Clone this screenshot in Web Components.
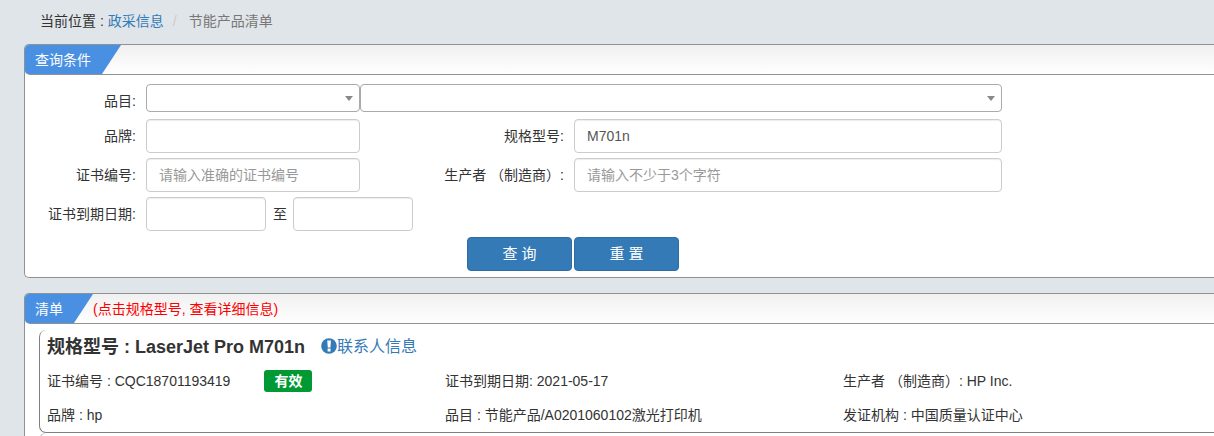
<!DOCTYPE html>
<html lang="zh-CN">
<head>
<meta charset="utf-8">
<title>节能产品清单</title>
<style>
  html {
    background: #e0e5e9;
  }

  body {
    margin: 0;
    font: 14px/20px "Liberation Sans", "Noto Sans CJK SC", sans-serif;
    color: #333;
  }

  main {
    display: flex;
    flex-direction: column;
    gap: 15px;
    padding-left: 24px;
  }
</style>
</head>
<body>
<main>
  <page-crumbs section="政采信息" current="节能产品清单">当前位置 :</page-crumbs>

  <title-panel>
    <span slot="title">查询条件</span>
    <query-form></query-form>
  </title-panel>

  <title-panel>
    <span slot="title">清单</span>
    <span slot="note">(点击规格型号, 查看详细信息)</span>
    <product-card model="LaserJet Pro M701n" status="有效">
      <span slot="number">证书编号 : CQC18701193419</span>
      <span slot="expires">证书到期日期: 2021-05-17</span>
      <span slot="maker">生产者 （制造商）: HP Inc.</span>
      <span slot="brand">品牌 : hp</span>
      <span slot="category">品目 : 节能产品/A0201060102激光打印机</span>
      <span slot="issuer">发证机构 : 中国质量认证中心</span>
    </product-card>
    <product-card></product-card>
  </title-panel>
</main>

<script>
class PageCrumbs extends HTMLElement {
  constructor() {
    super();
    this.attachShadow({ mode: "open" });
  }

  static get styles() {
    return /* css */`
      :host {
        display: block;
        padding: 10px 0 0 16px;
        line-height: 22px;
      }

      nav {
        display: flex;
        height: 19px;
      }

      a {
        color: #337ab7;
        text-decoration: none;
        margin-left: 4px;
      }

      .sep {
        color: #ccc;
        padding: 0 12px 0 9px;
      }

      .current {
        color: #777;
      }
    `;
  }

  connectedCallback() {
    this.shadowRoot.innerHTML = /* html */`
    <style>${PageCrumbs.styles}</style>
    <nav>
      <slot></slot>
      <a href="#">${this.getAttribute("section")}</a>
      <span class="sep">/</span>
      <span class="current">${this.getAttribute("current")}</span>
    </nav>`;
  }
}

class TitlePanel extends HTMLElement {
  constructor() {
    super();
    this.attachShadow({ mode: "open" });
  }

  static get styles() {
    return /* css */`
      :host {
        display: block;
        background: #fff;
        border: 1px solid #8f9193;
        border-right: 0;
        border-radius: 5px 0 0 5px;
      }

      header {
        display: flex;
        height: 29px;
        line-height: 30px;
        background: linear-gradient(#f0f0f0, #fff);
        border-bottom: 1px solid #8f9193;
        border-radius: 4px 0 0 5px;
      }

      /* blue tab with a slanted right edge */
      .tab {
        padding: 0 30px 0 10px;
        color: #fff;
        background: #4a90e2;
        border-radius: 4px 0 0 4px;
        clip-path: polygon(0 0, 100% 0, calc(100% - 19px) 100%, 0 100%);
      }

      .note {
        color: #f00;
      }

      .body {
        padding: 0 0 6px 14px;
      }
    `;
  }

  connectedCallback() {
    this.shadowRoot.innerHTML = /* html */`
    <style>${TitlePanel.styles}</style>
    <header>
      <div class="tab"><slot name="title"></slot></div>
      <div class="note"><slot name="note"></slot></div>
    </header>
    <div class="body"><slot></slot></div>`;
  }
}

class QueryForm extends HTMLElement {
  constructor() {
    super();
    this.attachShadow({ mode: "open" });
  }

  static get styles() {
    return /* css */`
      :host {
        display: block;
        padding-top: 9px;
      }

      form {
        display: grid;
        grid-template-columns: repeat(9, minmax(0, 107fr)) minmax(0, 212fr);
        grid-template-rows: 30px;
        row-gap: 5px;
      }

      label {
        white-space: nowrap;
      }

      form > label {
        padding: 7px 10px 0 0;
        text-align: right;
      }

      input, select {
        box-sizing: border-box;
        width: 100%;
        font: inherit;
        border-radius: 4px;
        background-color: #fff;
      }

      input {
        height: 34px;
        padding: 6px 12px;
        color: #555;
        border: 1px solid #ccc;
        box-shadow: inset 0 1px 1px rgba(0, 0, 0, 0.075);
      }

      input::placeholder {
        color: #999;
        opacity: 1;
      }

      select {
        appearance: none;
        height: 28px;
        border: 1px solid #aaa;
      }

      /* the arrow shares one grid cell with its select */
      .arrow {
        display: grid;
        align-content: start;
      }

      .arrow > * {
        grid-area: 1 / 1;
      }

      .arrow svg {
        width: 8px;
        height: 5px;
        margin-right: 7px;
        place-self: center end;
        pointer-events: none;
      }

      .lead { grid-column: 1; }
      .span2 { grid-column: span 2; }
      .span4 { grid-column: span 4; }
      .span6 { grid-column: span 6; }

      .dates {
        grid-column: span 8;
        display: flex;
        align-items: center;
      }

      .dates input {
        width: 120px;
      }

      .dates label {
        padding: 0 6px 0 7px;
      }

      .actions {
        grid-column: 5 / -1;
        display: flex;
        gap: 2px;
        padding-top: 1px;
      }

      button {
        width: 105px;
        height: 34px;
        font: inherit;
        font-size: 15px;
        color: #fff;
        background: #337ab7;
        border: 1px solid #2e6da4;
        border-radius: 4px;
      }
    `;
  }

  connectedCallback() {
    const arrow = /* html */`<svg viewBox="0 0 8 5" aria-hidden="true"><path d="M0 0h8L4 5z" fill="#888"/></svg>`;

    this.shadowRoot.innerHTML = /* html */`
    <style>${QueryForm.styles}</style>
    <form>
      <label class="lead" id="category-label" for="category">品目:</label>
      <div class="arrow span2"><select id="category"></select>${arrow}</div>
      <div class="arrow span6"><select aria-labelledby="category-label"></select>${arrow}</div>

      <label class="lead" for="brand">品牌:</label>
      <div class="span2"><input id="brand" type="text"></div>
      <label class="span2" for="model">规格型号:</label>
      <div class="span4"><input id="model" type="text" value="M701n"></div>

      <label class="lead" for="number">证书编号:</label>
      <div class="span2"><input id="number" type="text" placeholder="请输入准确的证书编号"></div>
      <label class="span2" for="maker">生产者 （制造商）:</label>
      <div class="span4"><input id="maker" type="text" placeholder="请输入不少于3个字符"></div>

      <label class="lead" for="from">证书到期日期:</label>
      <div class="dates">
        <input id="from" type="text">
        <label for="to">至</label>
        <input id="to" type="text">
      </div>

      <div class="actions">
        <button type="button">查 询</button>
        <button type="reset">重 置</button>
      </div>
    </form>`;
  }
}

class ProductCard extends HTMLElement {
  constructor() {
    super();
    this.attachShadow({ mode: "open" });
  }

  static get styles() {
    return /* css */`
      :host {
        display: block;
        min-height: 20px;
        padding-left: 7px;
        border: 1px solid #808080;
        border-width: 0 0 1px 1px;
        border-radius: 7px 0 0 7px;
      }

      :host(:first-of-type) {
        margin-top: 6px;
      }

      .head {
        display: flex;
        align-items: center;
        gap: 16px;
        height: 34px;
      }

      h4 {
        margin: 0;
        font-size: 18px;
        line-height: 20px;
      }

      a {
        display: flex;
        align-items: flex-start;
        font-size: 16px;
        color: #337ab7;
        text-decoration: none;
      }

      a svg {
        width: 16px;
        height: 17px;
      }

      .facts {
        display: grid;
        grid-template-columns: minmax(0, 398fr) minmax(0, 398fr) minmax(0, 371fr);
        line-height: 34px;
      }

      .number {
        display: flex;
        align-items: center;
        gap: 34px;
      }

      .status {
        padding: 0 10px;
        font-weight: bold;
        line-height: 22px;
        color: #fff;
        background: #093;
        border-radius: 3px;
      }
    `;
  }

  connectedCallback() {
    const model = this.getAttribute("model");

    this.shadowRoot.innerHTML = /* html */`
    <style>${ProductCard.styles}</style>`;

    // a card without a model is only an empty frame
    if (!model) return;

    this.shadowRoot.innerHTML += /* html */`
    <div class="head">
      <h4>规格型号 : ${model}</h4>
      <a href="#">
        <svg viewBox="0 0 16 17" aria-hidden="true">
          <circle cx="8" cy="9" r="7.8" fill="#337ab7"/>
          <path d="M6.2 3.4h3.8l-.6 7H6.8zM6.6 11.6h3v2.8h-3z" fill="#fff"/>
        </svg>联系人信息</a>
    </div>
    <div class="facts">
      <div class="number"><slot name="number"></slot><span class="status">${this.getAttribute("status")}</span></div>
      <slot name="expires"></slot>
      <slot name="maker"></slot>
      <slot name="brand"></slot>
      <slot name="category"></slot>
      <slot name="issuer"></slot>
    </div>`;
  }
}

customElements.define("page-crumbs", PageCrumbs);
customElements.define("title-panel", TitlePanel);
customElements.define("query-form", QueryForm);
customElements.define("product-card", ProductCard);
</script>
</body>
</html>
